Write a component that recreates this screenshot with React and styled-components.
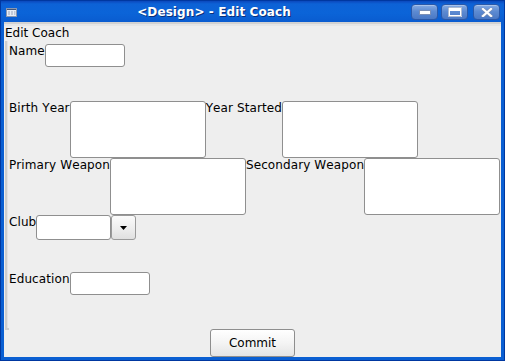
import React from "react";
import styled, { createGlobalStyle } from "styled-components";

const GlobalStyle = createGlobalStyle`
  html, body { margin: 0; padding: 0; background: #ffffff; }
  body { font-family: "DejaVu Sans", "Liberation Sans", sans-serif; font-kerning: none; }
  * { box-sizing: border-box; }
`;

const Window = styled.div`
  width: 505px;
  height: 361px;
  border: 1px solid #0037a0;
  background: #0a5fd2;
  padding: 0 3px 3px 3px;
  display: flex;
  flex-direction: column;
`;

const TitleBar = styled.div`
  height: 21px;
  margin: 0 -3px;
  padding: 0 4px 0 4px;
  display: flex;
  align-items: center;
  background: linear-gradient(to bottom, #0b48bd 0px, #0d62d6 3px, #0b64d8 12px, #0a5cd0 21px);
`;

const AppIcon = styled.svg`
  width: 11px;
  height: 9px;
  margin: 1px 0 0 1px;
  flex: none;
`;

const Title = styled.div`
  flex: 1;
  text-align: center;
  color: #ffffff;
  font-weight: bold;
  font-size: 12px;
  line-height: 14px;
  margin-top: 1px;
  letter-spacing: 0.1px;
  text-shadow: 1px 1px 0 #0a2f7a;
  white-space: nowrap;
`;

const Controls = styled.div`
  display: flex;
  align-items: center;
  gap: 3px;
  margin-top: 1px;
`;

const WinButton = styled.div`
  width: 27px;
  height: 16px;
  margin-left: ${(p) => p.$gap || 0}px;
  border: 1px solid #2a58a8;
  border-radius: 4px;
  background: linear-gradient(to bottom, #86abe2 0%, #5d8bd2 45%, #4a78c4 100%);
  box-shadow: inset 0 1px 0 rgba(255, 255, 255, 0.3);
  display: flex;
  align-items: center;
  justify-content: center;
`;

const Content = styled.div`
  flex: 1;
  background: #eeeeee;
  display: flex;
  flex-direction: column;
`;

const TopBand = styled.div`
  height: 4px;
  border-top: 2px solid #d2d2d2;
  background: #e6e6e6;
`;

const Heading = styled.div`
  height: 15px;
  line-height: 15px;
  font-size: 12px;
  color: #000;
  padding-left: 1px;
`;

const Panel = styled.div`
  height: 288px;
  margin-left: 1px;
  border-left: 2px solid #cdcdcd;
  box-shadow: inset 1px 0 0 #e2e2e2;
  padding: 3px 0 0 2px;
  display: grid;
  grid-template-rows: repeat(5, 57px);
  position: relative;
  &::after {
    content: "";
    position: absolute;
    left: -2px;
    bottom: -1px;
    width: 4px;
    height: 2px;
    background: #cdcdcd;
  }
`;

const Row = styled.div`
  display: flex;
  align-items: flex-start;
`;

const Label = styled.span`
  font-size: 12px;
  line-height: 14px;
  letter-spacing: 0.1px;
  color: #000;
  white-space: nowrap;
`;

const Field = styled.div`
  width: ${(p) => p.$w}px;
  height: ${(p) => p.$h}px;
  background: #ffffff;
  border: 1px solid #8f8f8f;
  border-radius: 3px;
  flex: none;
`;

const ComboButton = styled.div`
  width: 25px;
  height: 25px;
  border: 1px solid #9a9a9a;
  border-radius: 3px;
  background: linear-gradient(to bottom, #fbfbfb 0%, #ececec 60%, #e0e0e0 100%);
  display: flex;
  align-items: center;
  justify-content: center;
  flex: none;
`;

const ButtonRow = styled.div`
  height: 28px;
  display: flex;
  justify-content: center;
`;

const CommitButton = styled.div`
  width: 85px;
  height: 28px;
  border: 1px solid #8e8e8e;
  border-radius: 3px;
  background: linear-gradient(to bottom, #ffffff 0%, #f4f4f4 50%, #e4e4e4 100%);
  font-size: 12px;
  line-height: 26px;
  text-align: center;
  color: #000;
`;

export default function App() {
  return (
    <>
      <GlobalStyle />
      <Window>
        <TitleBar>
          <AppIcon viewBox="0 0 11 9">
            <rect x="0" y="0" width="11" height="9" fill="#e8edf5" />
            <rect x="0" y="0" width="11" height="2" fill="#44577a" />
            <rect x="0.5" y="0.5" width="10" height="8" fill="none" stroke="#8b98b0" strokeWidth="1" />
            <rect x="2" y="3.5" width="2" height="1" fill="#9aa6bb" />
            <rect x="5" y="3.5" width="2" height="1" fill="#9aa6bb" />
            <rect x="8" y="3.5" width="1.5" height="1" fill="#9aa6bb" />
            <rect x="2" y="5.5" width="2" height="1" fill="#9aa6bb" />
            <rect x="5" y="5.5" width="2" height="1" fill="#9aa6bb" />
            <rect x="8" y="5.5" width="1.5" height="1" fill="#9aa6bb" />
          </AppIcon>
          <Title>&lt;Design&gt; - Edit Coach</Title>
          <Controls>
            <WinButton>
              <svg width="12" height="5" viewBox="0 0 12 5">
                <rect x="0.5" y="0.5" width="11" height="4" fill="#ffffff" stroke="#7b8fb5" strokeWidth="1" />
              </svg>
            </WinButton>
            <WinButton>
              <svg width="14" height="10" viewBox="0 0 14 10">
                <rect x="1" y="1" width="12" height="8" fill="none" stroke="#ffffff" strokeWidth="2" />
                <rect x="1" y="1" width="12" height="3" fill="#ffffff" />
                <rect x="0.5" y="0.5" width="13" height="9" fill="none" stroke="#7b8fb5" strokeWidth="0.6" />
              </svg>
            </WinButton>
            <WinButton $gap={2}>
              <svg width="12" height="9" viewBox="0 0 12 9">
                <path d="M2 1 L10 8 M10 1 L2 8" stroke="#7b8fb5" strokeWidth="3.4" strokeLinecap="square" />
                <path d="M2 1 L10 8 M10 1 L2 8" stroke="#ffffff" strokeWidth="2.2" strokeLinecap="square" />
              </svg>
            </WinButton>
          </Controls>
        </TitleBar>
        <Content>
          <TopBand />
          <Heading>Edit Coach</Heading>
          <Panel>
            <Row>
              <Label>Name</Label>
              <Field $w={80} $h={23} />
            </Row>
            <Row>
              <Label>Birth Year</Label>
              <Field $w={136} $h={57} />
              <Label>Year Started</Label>
              <Field $w={136} $h={57} />
            </Row>
            <Row>
              <Label>Primary Weapon</Label>
              <Field $w={136} $h={57} />
              <Label>Secondary Weapon</Label>
              <Field $w={136} $h={57} />
            </Row>
            <Row>
              <Label>Club</Label>
              <Field $w={75} $h={25} />
              <ComboButton>
                <svg width="7" height="4" viewBox="0 0 7 4">
                  <polygon points="0,0 7,0 3.5,4" fill="#000000" />
                </svg>
              </ComboButton>
            </Row>
            <Row>
              <Label>Education</Label>
              <Field $w={80} $h={23} />
            </Row>
          </Panel>
          <ButtonRow>
            <CommitButton>Commit</CommitButton>
          </ButtonRow>
        </Content>
      </Window>
    </>
  );
}
